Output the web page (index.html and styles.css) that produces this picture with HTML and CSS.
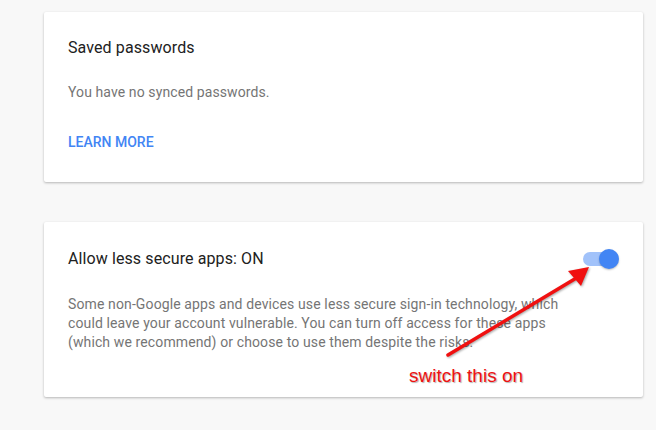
FILE: index.html
```html
<!DOCTYPE html>
<html>
<head>
<meta charset="utf-8">
<link rel="stylesheet" href="styles.css">
</head>
<body>
<div class="page">
  <section class="card card-passwords">
    <h2 class="card-title">Saved passwords</h2>
    <p class="card-text">You have no synced passwords.</p>
    <a class="card-link" href="#">LEARN MORE</a>
  </section>
  <section class="card card-secure">
    <div class="title-row">
      <h2 class="card-title">Allow less secure apps: ON</h2>
      <div class="switch"><span class="track"></span><span class="knob"></span></div>
    </div>
    <p class="card-desc">Some non-Google apps and devices use less secure sign-in technology, which could leave your account vulnerable. You can turn off access for these apps (which we recommend) or choose to use them despite the risks.</p>
  </section>
  <svg class="annot-arrow" width="656" height="430" viewBox="0 0 656 430">
    <line x1="448" y1="355" x2="578" y2="277" stroke="#f01010" stroke-width="3.5" stroke-linecap="round"/>
    <polygon points="589,267 568,271 581,286" fill="#f01010"/>
  </svg>
  <div class="annot-text">switch this on</div>
</div>
</body>
</html>
```
FILE: styles.css
```css
html, body {
  margin: 0;
  padding: 0;
  background: #f8f8f8;
}
.page {
  position: relative;
  width: 656px;
  height: 430px;
  box-sizing: border-box;
  padding: 12px 13px 0 44px;
  display: flex;
  flex-direction: column;
  gap: 40px;
  font-family: Roboto, "Liberation Sans", sans-serif;
  overflow: hidden;
}
.card {
  background: #fff;
  border-radius: 2px;
  box-shadow: 0 1px 3px rgba(0,0,0,0.18), 0 1px 2px rgba(0,0,0,0.10);
  padding: 25px 24px 30px 24px;
}
.card-title {
  margin: 0;
  font-size: 16px;
  font-weight: 400;
  line-height: 22px;
  color: #212121;
  letter-spacing: 0.1px;
}
.card-text {
  margin: 23px 0 0 0;
  font-size: 14px;
  line-height: 20px;
  color: #757575;
  letter-spacing: 0.1px;
}
.card-link {
  display: block;
  margin-top: 30px;
  font-size: 14px;
  line-height: 20px;
  font-weight: 500;
  color: #4285f4;
  text-decoration: none;
}
.card-secure {
  padding-top: 26px;
  padding-bottom: 45px;
}
.title-row {
  display: flex;
  align-items: center;
  justify-content: space-between;
}
.switch {
  position: relative;
  width: 36px;
  height: 20px;
}
.track {
  position: absolute;
  left: 0;
  top: 3px;
  width: 34px;
  height: 14px;
  border-radius: 7px;
  background: #a1c2fa;
}
.knob {
  position: absolute;
  right: 0;
  top: 0;
  width: 20px;
  height: 20px;
  border-radius: 50%;
  background: #4285f4;
  box-shadow: 0 1px 2px rgba(0,0,0,0.25);
}
.card-desc {
  margin: 25px 0 0 0;
  max-width: 492px;
  font-size: 14px;
  line-height: 19px;
  color: #757575;
  letter-spacing: 0.12px;
}
.annot-arrow {
  position: absolute;
  left: 0;
  top: 0;
  pointer-events: none;
  filter: drop-shadow(1px 1px 1px rgba(0,0,0,0.35));
}
.annot-text {
  position: absolute;
  left: 409px;
  top: 365px;
  font-family: "Liberation Sans", Arial, sans-serif;
  font-size: 19px;
  line-height: 22px;
  color: #ee1111;
  text-shadow: 1px 1px 1px rgba(0,0,0,0.3);
}
```
